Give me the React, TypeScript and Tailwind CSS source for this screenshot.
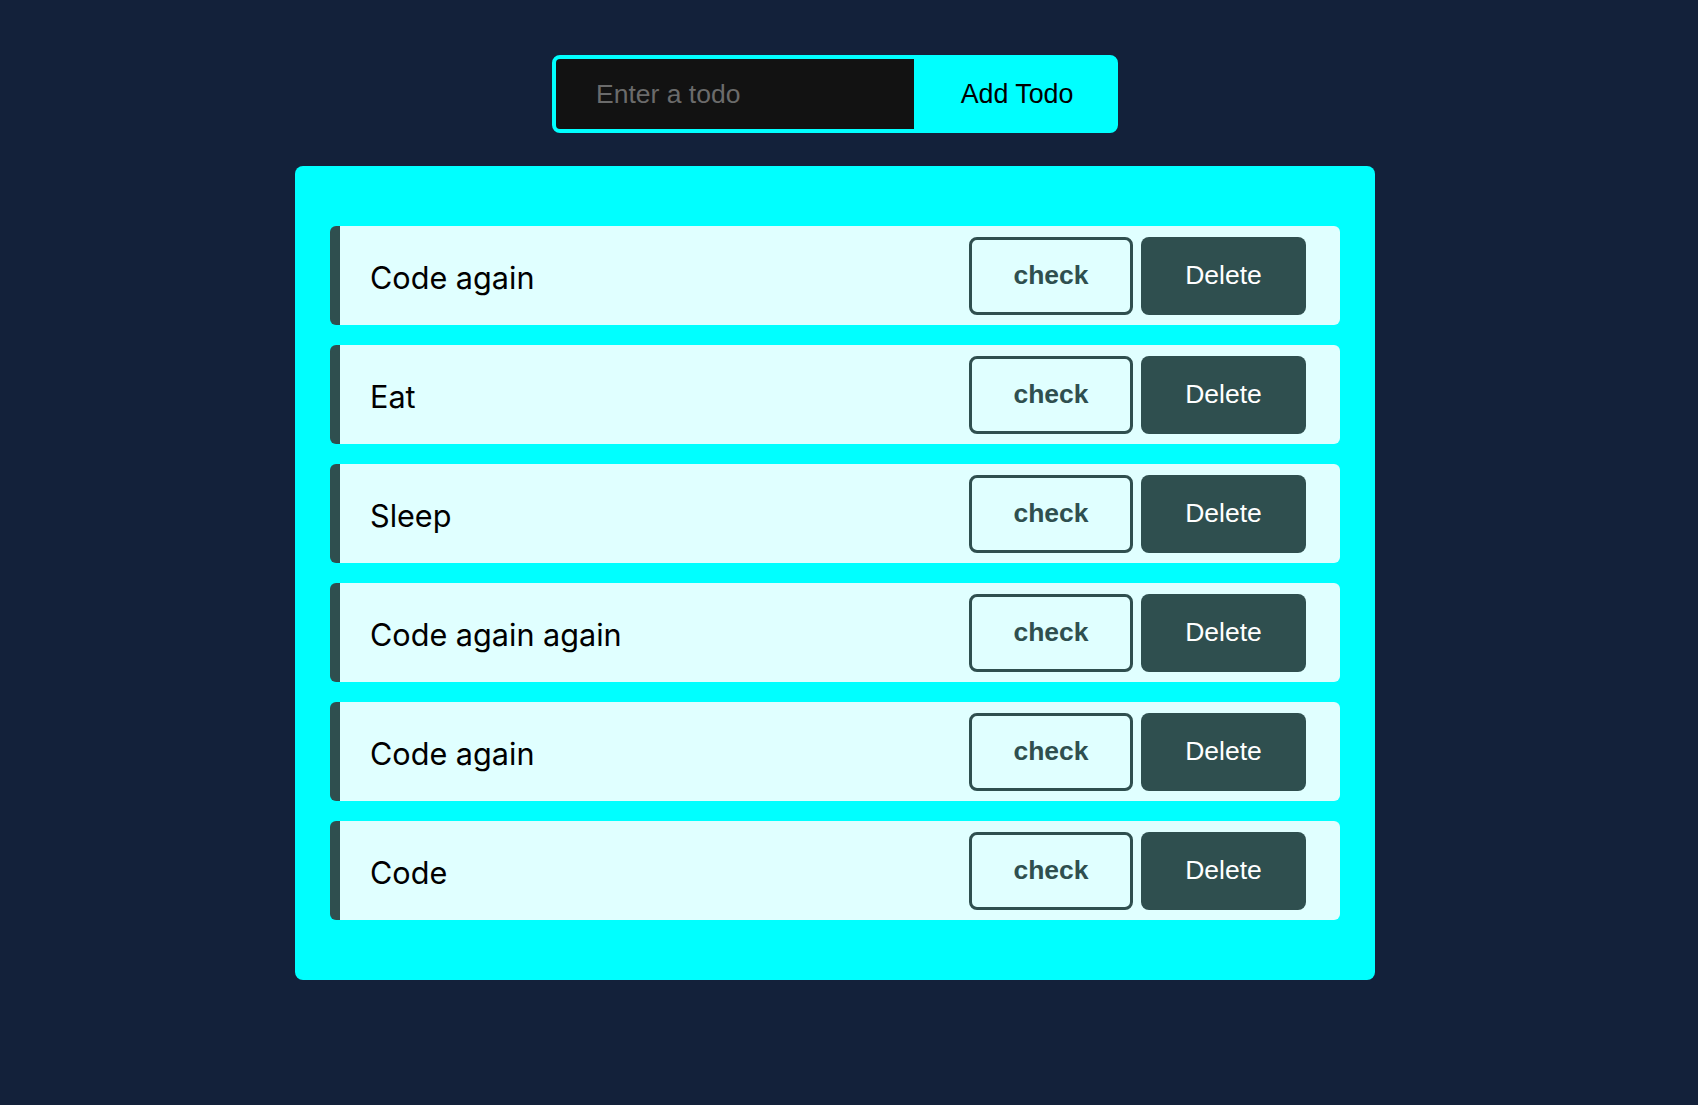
import React, { useState } from "react";

type Todo = { id: number; title: string; done: boolean };

const START: Todo[] = [
  { id: 1, title: "Code again", done: false },
  { id: 2, title: "Eat", done: false },
  { id: 3, title: "Sleep", done: false },
  { id: 4, title: "Code again again", done: false },
  { id: 5, title: "Code again", done: false },
  { id: 6, title: "Code", done: false },
];

const App = () => {
  const [todos, setTodos] = useState<Todo[]>(START);
  const [text, setText] = useState("");

  const addTodo = () => {
    if (!text.trim()) return;
    setTodos([{ id: Date.now(), title: text, done: false }, ...todos]);
    setText("");
  };

  return (
    <div className="min-h-screen w-full bg-[#13213a] font-['Liberation_Sans',Arial,sans-serif]">
      <div className="flex w-[1670px] flex-col items-center pt-[55px] pb-10">
        <div className="flex h-[78px] w-[566px] overflow-hidden rounded-lg border-4 border-[#00ffff] bg-[#00ffff]">
          <input
            value={text}
            onChange={(e) => setText(e.target.value)}
            placeholder="Enter a todo"
            className="h-full w-[358px] bg-[#121212] pl-[40px] text-[26.5px] text-white outline-none placeholder:text-[#6b6b6b]"
          />
          <button onClick={addTodo} className="flex-1 pl-[6px] text-[26.8px] text-black">
            Add Todo
          </button>
        </div>

        <div className="mt-[33px] flex w-[1080px] flex-col gap-[20px] rounded-lg bg-[#00ffff] px-[35px] py-[60px]">
          {todos.map((t) => (
            <div
              key={t.id}
              className="flex h-[99px] items-center rounded-md border-l-[10px] border-[#2f4f4f] bg-[#e0ffff] pl-[30px] pr-[34px]"
            >
              <span
                className={
                  "flex-1 pt-[4px] font-['Inter',sans-serif] text-[30.6px] text-black" +
                  (t.done ? " line-through" : "")
                }
              >
                {t.title}
              </span>
              <button
                onClick={() =>
                  setTodos(todos.map((x) => (x.id === t.id ? { ...x, done: !x.done } : x)))
                }
                className="h-[78px] w-[164px] rounded-lg border-[3px] border-[#2f4f4f] text-[26.5px] font-bold text-[#2f4f4f]"
              >
                check
              </button>
              <button
                onClick={() => setTodos(todos.filter((x) => x.id !== t.id))}
                className="ml-[8px] h-[78px] w-[165px] rounded-lg bg-[#2f4f4f] text-[26.5px] text-white"
              >
                Delete
              </button>
            </div>
          ))}
        </div>
      </div>
    </div>
  );
};

export default App;
